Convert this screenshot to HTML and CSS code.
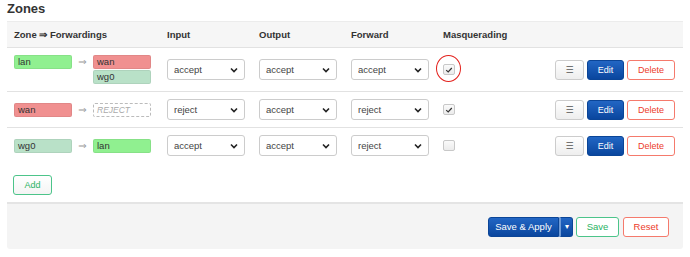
FILE: index.html
```html
<!DOCTYPE html>
<html lang="en">

<head>
    <meta charset="UTF-8">
    <meta name="viewport" content="width=device-width, initial-scale=1.0">
    <title>Firewall - Zones</title>
    <link rel="stylesheet" href="styles.css">
</head>

<body>
    <div class="page">
        <h3 class="section-title">Zones</h3>
        <table class="zone-table">
            <colgroup>
                <col class="col-zone">
                <col class="col-policy">
                <col class="col-policy">
                <col class="col-policy">
                <col class="col-masq">
                <col>
            </colgroup>
            <tr class="table-head">
                <th>Zone ⇒ Forwardings</th>
                <th>Input</th>
                <th>Output</th>
                <th>Forward</th>
                <th>Masquerading</th>
                <th></th>
            </tr>
            <tr>
                <td>
                    <div class="forwardings">
                        <span class="zone-badge zone-lan">lan</span>
                        <span class="fwd-arrow">⇒</span>
                        <div class="zone-stack">
                            <span class="zone-badge zone-wan">wan</span>
                            <span class="zone-badge zone-wg0">wg0</span>
                        </div>
                    </div>
                </td>
                <td><select class="policy"><option>accept</option></select></td>
                <td><select class="policy"><option>accept</option></select></td>
                <td><select class="policy"><option>accept</option></select></td>
                <td>
                    <span class="check-wrap">
                        <span class="checkbox checked"><svg viewBox="0 0 10 10" width="8" height="8"><path d="M1.5 5.2 L4 7.5 L8.5 2.5" fill="none" stroke="#333" stroke-width="1.5"/></svg></span>
                        <span class="highlight-ring"></span>
                    </span>
                </td>
                <td class="actions">
                    <button class="btn btn-neutral">☰</button><button class="btn btn-edit">Edit</button><button class="btn btn-delete">Delete</button>
                </td>
            </tr>
            <tr>
                <td>
                    <div class="forwardings">
                        <span class="zone-badge zone-wan">wan</span>
                        <span class="fwd-arrow">⇒</span>
                        <div class="zone-stack">
                            <span class="zone-badge zone-reject">REJECT</span>
                        </div>
                    </div>
                </td>
                <td><select class="policy"><option>reject</option></select></td>
                <td><select class="policy"><option>accept</option></select></td>
                <td><select class="policy"><option>reject</option></select></td>
                <td>
                    <span class="check-wrap">
                        <span class="checkbox checked"><svg viewBox="0 0 10 10" width="8" height="8"><path d="M1.5 5.2 L4 7.5 L8.5 2.5" fill="none" stroke="#333" stroke-width="1.5"/></svg></span>
                    </span>
                </td>
                <td class="actions">
                    <button class="btn btn-neutral">☰</button><button class="btn btn-edit">Edit</button><button class="btn btn-delete">Delete</button>
                </td>
            </tr>
            <tr>
                <td>
                    <div class="forwardings">
                        <span class="zone-badge zone-wg0">wg0</span>
                        <span class="fwd-arrow">⇒</span>
                        <div class="zone-stack">
                            <span class="zone-badge zone-lan">lan</span>
                        </div>
                    </div>
                </td>
                <td><select class="policy"><option>accept</option></select></td>
                <td><select class="policy"><option>accept</option></select></td>
                <td><select class="policy"><option>reject</option></select></td>
                <td>
                    <span class="check-wrap">
                        <span class="checkbox"></span>
                    </span>
                </td>
                <td class="actions">
                    <button class="btn btn-neutral">☰</button><button class="btn btn-edit">Edit</button><button class="btn btn-delete">Delete</button>
                </td>
            </tr>
        </table>

        <div class="add-row">
            <button class="btn btn-add">Add</button>
        </div>

        <div class="page-actions">
            <div class="split-btn">
                <button class="btn btn-apply">Save &amp; Apply</button><button class="btn btn-apply-drop">▾</button>
            </div>
            <button class="btn btn-save">Save</button>
            <button class="btn btn-reset">Reset</button>
        </div>
    </div>
</body>

</html>
```

FILE: styles.css
```css
body {
    margin: 0;
    padding: 0;
    font-family: 'Liberation Sans', Arial, sans-serif;
    font-size: 9.5px;
    color: #404040;
    background-color: #fff;
}

.page {
    padding: 0 7px;
}

.section-title {
    margin: 0;
    height: 21px;
    line-height: 17px;
    font-size: 13px;
    font-weight: bold;
    color: #333;
}

/* Zone table */
.zone-table {
    width: 676px;
    border-collapse: collapse;
    table-layout: fixed;
}

.col-zone {
    width: 153px;
}

.col-policy {
    width: 92px;
}

.col-masq {
    width: 93px;
}

.zone-table tr {
    border-top: 1px solid #e2e2e2;
}

.table-head {
    background-color: #f6f6f6;
}

.table-head th {
    height: 25px;
    padding: 0 7px;
    text-align: left;
    font-weight: bold;
    color: #333;
    vertical-align: middle;
    border-top: 1px solid #ececec;
}

.zone-table td {
    padding: 7px;
    vertical-align: middle;
}

.forwardings {
    display: flex;
    align-items: flex-start;
}

.fwd-arrow {
    width: 21px;
    text-align: center;
    color: #999;
    font-family: 'DejaVu Sans', sans-serif;
    font-size: 10px;
    line-height: 13px;
}

.zone-stack {
    display: flex;
    flex-direction: column;
    gap: 1px;
}

.zone-badge {
    display: block;
    box-sizing: border-box;
    width: 58px;
    height: 14px;
    padding: 0 3px;
    line-height: 12px;
    border: 1px solid rgba(0, 0, 0, 0.06);
    border-radius: 2px;
    color: #333;
    font-size: 9.5px;
}

.zone-lan {
    background-color: #90f090;
}

.zone-wan {
    background-color: #f09090;
}

.zone-wg0 {
    background-color: #b9e1c8;
}

.zone-reject {
    border: 1px dashed #bbb;
    background-color: #fff;
    color: #aaa;
    font-style: italic;
    font-size: 8.5px;
}

/* Policy selects */
.policy {
    -webkit-appearance: none;
    appearance: none;
    box-sizing: border-box;
    width: 78px;
    height: 21px;
    padding: 0 6px;
    border: 1px solid #ccc;
    border-radius: 3px;
    background-color: #fff;
    background-image: url("data:image/svg+xml;utf8,<svg xmlns='http://www.w3.org/2000/svg' width='8' height='6' viewBox='0 0 8 6'><path d='M1 1.5 L4 4.5 L7 1.5' fill='none' stroke='%23222' stroke-width='1.6'/></svg>");
    background-repeat: no-repeat;
    background-position: right 6px center;
    font-family: inherit;
    font-size: 9.5px;
    color: #444;
    vertical-align: middle;
}

/* Masquerading checkbox */
.check-wrap {
    position: relative;
    display: inline-block;
    vertical-align: middle;
}

.checkbox {
    display: flex;
    align-items: center;
    justify-content: center;
    box-sizing: border-box;
    width: 12px;
    height: 11px;
    border: 1px solid #c8c8c8;
    border-radius: 2px;
    background: linear-gradient(#fafafa, #ececec);
}

.highlight-ring {
    position: absolute;
    left: -7px;
    top: -9px;
    width: 23px;
    height: 25px;
    border: 1.5px solid #e3211c;
    border-radius: 50%;
}

/* Buttons */
.btn {
    box-sizing: border-box;
    height: 20px;
    padding: 0 8px;
    border: 1px solid #ccc;
    border-radius: 3px;
    background: #fff;
    font-family: inherit;
    font-size: 9px;
    line-height: 18px;
    cursor: pointer;
    vertical-align: middle;
}

.actions {
    text-align: right;
    padding-right: 8px !important;
    white-space: nowrap;
}

.actions .btn + .btn {
    margin-left: 3px;
}

.btn-neutral {
    width: 29px;
    padding: 0;
    background: linear-gradient(#fff, #eee);
    color: #555;
    font-family: 'DejaVu Sans', sans-serif;
    font-size: 9px;
}

.btn-edit {
    width: 37px;
    padding: 0;
    border-color: #0b4597;
    background: linear-gradient(#2266c4, #0a469e);
    color: #fff;
}

.btn-delete {
    width: 48px;
    padding: 0;
    border-color: #f57a6c;
    color: #ec3b2a;
}

.add-row {
    padding: 12px 6px 0;
}

.btn-add {
    width: 39px;
    padding: 0;
    border-color: #4cc48a;
    color: #2bb364;
    background: linear-gradient(#fff, #f4f4f4);
}

/* Footer actions */
.page-actions {
    display: flex;
    justify-content: flex-end;
    align-items: center;
    margin-top: 7px;
    width: 676px;
    box-sizing: border-box;
    height: 47px;
    padding: 1px 14px 0 0;
    border-top: 2px solid #e4e4e4;
    border-radius: 0 0 3px 3px;
    background-color: #f4f4f4;
}

.split-btn {
    display: flex;
    margin-right: 3px;
}

.btn-save {
    margin-right: 4px;
}

.btn-apply {
    width: 71px;
    padding: 0;
    border-color: #0b4597;
    border-radius: 3px 0 0 3px;
    background: linear-gradient(#2266c4, #0a469e);
    color: #fff;
    font-size: 9.5px;
}

.btn-apply-drop {
    width: 14px;
    padding: 0;
    border-color: #0b4597;
    border-left: 2px solid #6e9ad6;
    border-radius: 0 3px 3px 0;
    background: linear-gradient(#2266c4, #0a469e);
    color: #fff;
    font-size: 8px;
}

.btn-save {
    width: 43px;
    padding: 0;
    border-color: #4cc48a;
    color: #2bb364;
    font-size: 9.5px;
}

.btn-reset {
    width: 46px;
    padding: 0;
    border-color: #f57a6c;
    color: #ec3b2a;
    font-size: 9.5px;
}
```
